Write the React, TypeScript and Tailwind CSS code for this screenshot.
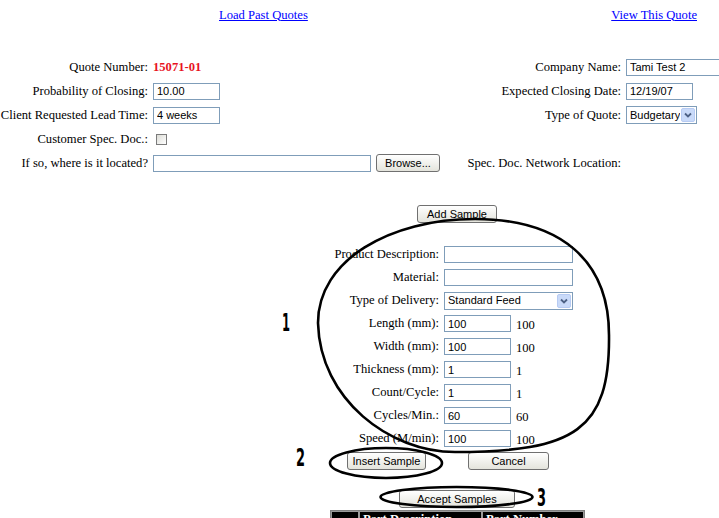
import React from "react";

const serif = "font-['Liberation_Serif','Times_New_Roman',serif]";
const sans = "font-['Liberation_Sans',Arial,sans-serif]";

type FieldProps = { value?: string; w: string };

const Field: React.FC<FieldProps> = ({ value = "", w }) => (
  <input
    readOnly
    value={value}
    className={`h-[17px] ${w} shrink-0 border border-[#7f9db9] bg-white px-[3px] text-[11px] text-black outline-none ${sans}`}
  />
);

const FakeSelect: React.FC<{ value: string; w: string }> = ({ value, w }) => (
  <div className={`flex h-[18px] ${w} shrink-0 items-center border border-[#7f9db9] bg-white pl-[3px] text-[11px] text-black ${sans}`}>
    <span className="flex-1 overflow-hidden whitespace-nowrap">{value}</span>
    <span className="m-[1px] flex h-[14px] w-[14px] shrink-0 items-center justify-center rounded-[2px] border border-[#b7cbf3] bg-[#c9daf9]">
      <svg width="8" height="6" viewBox="0 0 8 6">
        <path d="M1 1.5 L4 4.5 L7 1.5" stroke="#4d6185" strokeWidth="1.8" fill="none" />
      </svg>
    </span>
  </div>
);

const Btn: React.FC<{ label: string; w: string }> = ({ label, w }) => (
  <button
    type="button"
    className={`h-[18px] ${w} shrink-0 rounded-[3px] border border-[#707070] bg-linear-to-b from-white to-[#e4e4dc] text-[11px] leading-none text-black ${sans}`}
  >
    {label}
  </button>
);

const Label: React.FC<{ children: React.ReactNode }> = ({ children }) => (
  <div className="flex items-center justify-end whitespace-nowrap">{children}</div>
);

const Cell: React.FC<{ children?: React.ReactNode }> = ({ children }) => (
  <div className="flex items-center gap-[5px] whitespace-nowrap">{children}</div>
);

const sampleRows = [
  { label: "Length (mm):", value: "100" },
  { label: "Width (mm):", value: "100" },
  { label: "Thickness (mm):", value: "1" },
  { label: "Count/Cycle:", value: "1" },
  { label: "Cycles/Min.:", value: "60" },
  { label: "Speed (M/min):", value: "100" },
];

export default function App() {
  return (
    <div className={`relative h-screen w-full overflow-hidden bg-white text-[12.6px] text-black ${serif}`}>
      {/* links */}
      <div className="flex h-[30px] items-center">
        <a href="#" className="ml-[219px] text-[#0000ff] underline">Load Past Quotes</a>
        <a href="#" className="ml-auto mr-[22px] text-[#0000ff] underline">View This Quote</a>
      </div>

      {/* quote header */}
      <div className="mt-[25px] grid grid-cols-[148px_306px_157px_1fr] auto-rows-[24px] gap-x-[5px]">
        <Label>Quote Number:</Label>
        <Cell><span className="font-bold text-[#e8131f]">15071-01</span></Cell>
        <Label>Company Name:</Label>
        <Cell><Field value="Tami Test 2" w="w-[120px]" /></Cell>

        <Label>Probability of Closing:</Label>
        <Cell><Field value="10.00" w="w-[67px]" /></Cell>
        <Label>Expected Closing Date:</Label>
        <Cell><Field value="12/19/07" w="w-[67px]" /></Cell>

        <Label>Client Requested Lead Time:</Label>
        <Cell><Field value="4 weeks" w="w-[67px]" /></Cell>
        <Label>Type of Quote:</Label>
        <Cell><FakeSelect value="Budgetary" w="w-[71px]" /></Cell>

        <Label>Customer Spec. Doc.:</Label>
        <Cell><span className="ml-[3px] h-[11px] w-[11px] border border-[#7b7b7b] bg-linear-to-br from-[#dcdcd6] to-white" /></Cell>
        <div />
        <div />

        <Label>If so, where is it located?</Label>
        <Cell>
          <Field w="w-[218px]" />
          <Btn label="Browse..." w="w-[64px]" />
        </Cell>
        <Label>Spec. Doc. Network Location:</Label>
        <div />
      </div>

      {/* sample entry */}
      <div className="ml-[330px] mt-[30px] flex w-[255px] flex-col">
        <div className="flex pl-[87px]">
          <Btn label="Add Sample" w="w-[80px]" />
        </div>

        <div className="mt-[20px] grid grid-cols-[109px_1fr] auto-rows-[23px] gap-x-[5px]">
          <Label>Product Description:</Label>
          <Cell><Field w="w-[129px]" /></Cell>
          <Label>Material:</Label>
          <Cell><Field w="w-[129px]" /></Cell>
          <Label>Type of Delivery:</Label>
          <Cell><FakeSelect value="Standard Feed" w="w-[129px]" /></Cell>
          {sampleRows.map((r) => (
            <React.Fragment key={r.label}>
              <Label>{r.label}</Label>
              <Cell>
                <Field value={r.value} w="w-[67px]" />
                <span className="mt-[3px]">{r.value}</span>
              </Cell>
            </React.Fragment>
          ))}
        </div>

        <div className="mt-[2px] flex gap-[42px] pl-[17px]">
          <Btn label="Insert Sample" w="w-[79px]" />
          <Btn label="Cancel" w="w-[81px]" />
        </div>

        <div className="mt-[20px] flex pl-[69px]">
          <Btn label="Accept Samples" w="w-[116px]" />
        </div>

        <div className="mt-[2px] flex h-[24px] gap-[2px] border border-[#808080] bg-[#9a9a9a] p-[1px] font-bold text-white">
          <div className="w-[26px] bg-black" />
          <div className="w-[121px] bg-black px-[3px] leading-[15px]">Part Description</div>
          <div className="flex-1 bg-black px-[3px] leading-[15px]">Part Number</div>
        </div>
      </div>

      {/* hand-drawn annotations */}
      <svg className="pointer-events-none absolute left-0 top-0" width="719" height="518" viewBox="0 0 719 518">
        <path
          d="M318 323 C318 260 390 219 475 219 C560 219 609 260 609 335 C610 430 575 452 455 452 C390 452 320 400 318 323 Z"
          fill="none"
          stroke="#000"
          strokeWidth="2.6"
        />
        <ellipse cx="386" cy="463" rx="56" ry="15" fill="none" stroke="#000" strokeWidth="2.6" />
        <ellipse cx="456.5" cy="497" rx="76" ry="10" fill="none" stroke="#000" strokeWidth="2.6" />
        <g fontFamily="'DejaVu Sans Condensed','Liberation Sans',sans-serif" fontWeight="bold" fontSize="25" fill="#000">
          <text x="282" y="331" textLength="8" lengthAdjust="spacingAndGlyphs">1</text>
          <text x="296" y="466" textLength="9" lengthAdjust="spacingAndGlyphs">2</text>
          <text x="537" y="506" textLength="9" lengthAdjust="spacingAndGlyphs">3</text>
        </g>
      </svg>
    </div>
  );
}
